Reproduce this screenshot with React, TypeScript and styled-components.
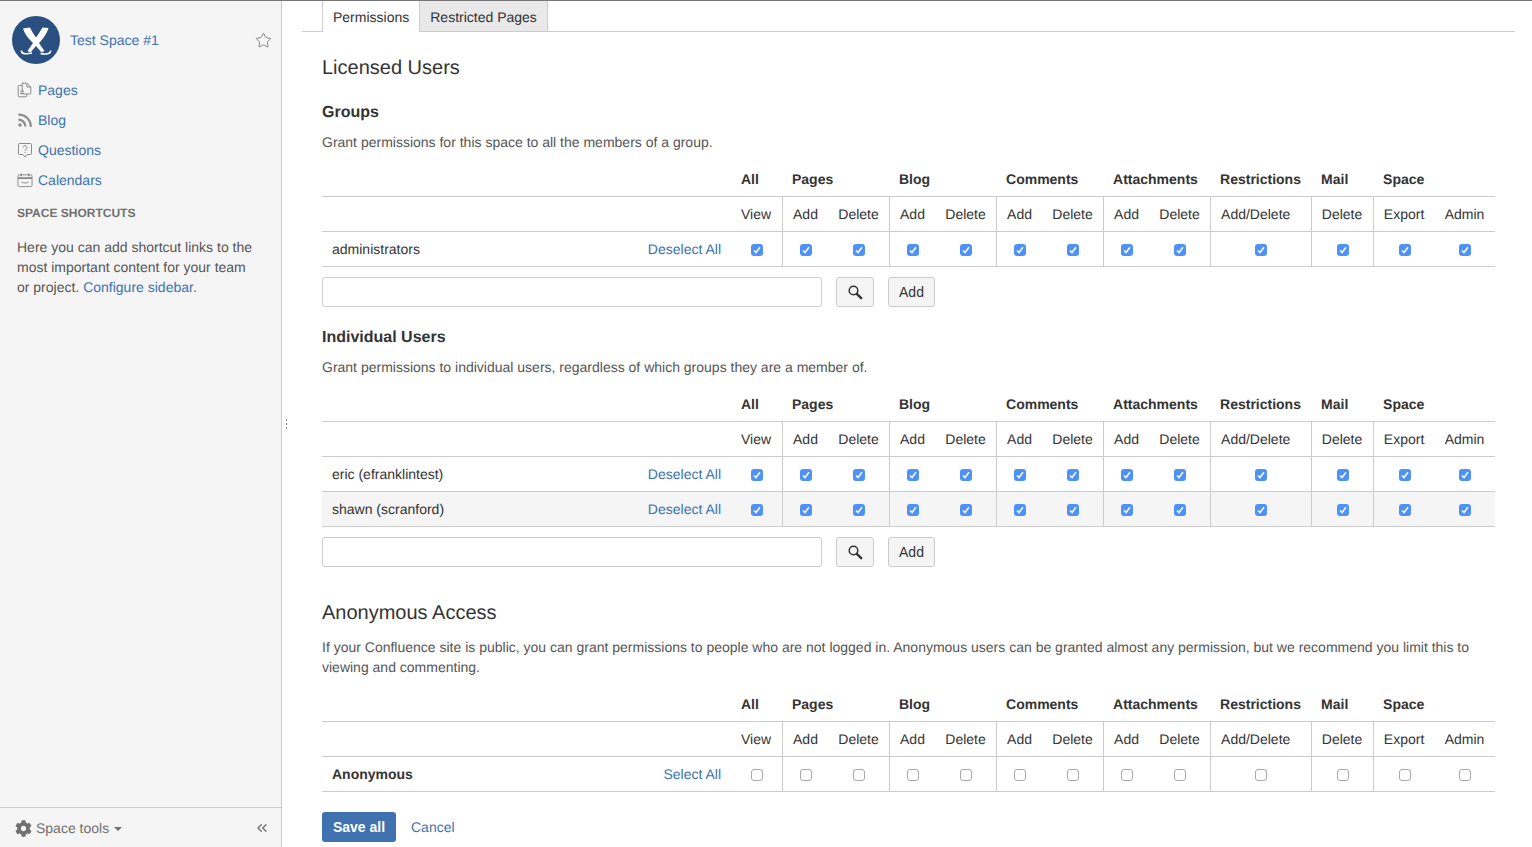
import React from "react";
import styled, { createGlobalStyle } from "styled-components";
import { Star, ChevronsLeft } from "lucide-react";
import { FaCog } from "react-icons/fa";

const Global = createGlobalStyle`
  html, body { margin: 0; padding: 0; height: 100%; overflow: hidden; background: #fff; }
  body { font-family: "Liberation Sans", Arial, sans-serif; font-size: 14px; line-height: 20px; color: #333; text-rendering: geometricPrecision; }
  * { box-sizing: border-box; }
`;

const Page = styled.div`
  display: flex;
  height: 100vh;
  border-top: 1px solid #777;
  position: relative;
`;
const Sidebar = styled.aside`
  width: 282px;
  flex: none;
  display: flex;
  flex-direction: column;
  background: #f5f5f5;
  border-right: 1px solid #ccc;
`;
const SideBody = styled.div`
  flex: 1;
  min-height: 0;
`;
const SpaceHeader = styled.div`
  display: flex;
  align-items: center;
  height: 48px;
  margin: 15px 9px 0 12px;
`;
const SpaceName = styled.a`
  margin-left: 10px;
  flex: 1;
  color: #3b73af;
`;
const NavList = styled.nav`
  margin-top: 11px;
  display: flex;
  flex-direction: column;
`;
const NavItem = styled.a`
  display: flex;
  align-items: center;
  height: 30px;
  padding-left: 17px;
  gap: 5px;
  color: #3b73af;
  svg { flex: none; }
`;
const ShortcutsTitle = styled.h5`
  margin: 8px 0 0 17px;
  font-size: 12px;
  line-height: 20px;
  font-weight: 700;
  color: #707070;
  text-transform: uppercase;
`;
const ShortcutsText = styled.p`
  margin: 14px 20px 0 17px;
  color: #555;
`;
const InlineLink = styled.a`
  color: #3b73af;
`;
const SideFooter = styled.div`
  height: 40px;
  flex: none;
  border-top: 1px solid #ccc;
  display: flex;
  align-items: center;
  padding: 1px 11px 0 15px;
  color: #707070;
`;
const ToolsLabel = styled.span`
  margin-left: 4px;
`;
const Caret = styled.span`
  width: 8px;
  height: 0;
  flex: none;
  margin: 1px 0 0 5px;
  border-left: 4px solid transparent;
  border-right: 4px solid transparent;
  border-top: 4px solid #707070;
`;
const Spacer = styled.span`
  flex: 1;
`;
const Grip = styled.div`
  position: absolute;
  left: 286px;
  top: 418px;
  width: 1px;
  height: 12px;
  background: repeating-linear-gradient(to bottom, #888 0 2px, transparent 2px 4px);
`;
const Main = styled.main`
  flex: 1;
  min-width: 0;
  padding: 0 17px 0 20px;
`;
const Tabs = styled.div`
  display: flex;
  height: 31px;
  padding-left: 20px;
  border-bottom: 1px solid #ccc;
`;
const Tab = styled.div<{ $active?: boolean }>`
  height: ${(p) => (p.$active ? "31px" : "30px")};
  padding: 6px 10px 0;
  border-left: 1px solid #ccc;
  border-right: ${(p) => (p.$active ? "0" : "1px solid #ccc")};
  background: ${(p) => (p.$active ? "#fff" : "#e9e9e9")};
  color: #333;
  white-space: nowrap;
`;
const Content = styled.div`
  padding-left: 20px;
  width: 1193px;
`;
const H2 = styled.h2<{ $top: number }>`
  margin: ${(p) => p.$top}px 0 0;
  font-size: 20px;
  line-height: 28px;
  font-weight: 400;
  color: #333;
`;
const H3 = styled.h3<{ $top: number }>`
  margin: ${(p) => p.$top}px 0 0;
  height: 20px;
  font-size: 16px;
  line-height: 22px;
  font-weight: 700;
  color: #333;
`;
const Para = styled.p`
  margin: 10px 0 0;
  color: #555;
`;
const Table = styled.table`
  margin-top: 10px;
  width: 1173px;
  table-layout: fixed;
  border-collapse: separate;
  border-spacing: 0;
`;
const Head = styled.th`
  height: 35px;
  padding: 0 10px;
  text-align: left;
  font-weight: 700;
  border-bottom: 1px solid #ccc;
  white-space: nowrap;
`;
const SubHead = styled.td<{ $sep?: boolean; $left?: boolean }>`
  height: 35px;
  padding: ${(p) => (p.$left ? "0 0 0 10px" : "0 1px 0 0")};
  text-align: ${(p) => (p.$left ? "left" : "center")};
  border-bottom: 1px solid #ccc;
  border-left: ${(p) => (p.$sep ? "1px solid #ccc" : "0")};
`;
const Row = styled.tr<{ $shaded?: boolean }>`
  background: ${(p) => (p.$shaded ? "#f5f5f5" : "transparent")};
`;
const Cell = styled.td<{ $sep?: boolean }>`
  height: 35px;
  padding: 0;
  text-align: center;
  vertical-align: middle;
  border-bottom: 1px solid #ccc;
  border-left: ${(p) => (p.$sep ? "1px solid #ccc" : "0")};
`;
const NameCell = styled.td`
  height: 35px;
  padding: 0 10px;
  border-bottom: 1px solid #ccc;
`;
const NameWrap = styled.div`
  display: flex;
  justify-content: space-between;
`;
const NameText = styled.span<{ $bold?: boolean }>`
  font-weight: ${(p) => (p.$bold ? 700 : 400)};
`;
const Check = styled.span<{ $on: boolean }>`
  display: flex;
  align-items: center;
  justify-content: center;
  width: 12px;
  height: 12px;
  margin: 1px auto 0;
  border-radius: 3px;
  background: ${(p) => (p.$on ? "#4e92f7" : "#fff")};
  border: ${(p) => (p.$on ? "0" : "1px solid #a9a9a9")};
`;
const FormRow = styled.div`
  display: flex;
  margin-top: 10px;
`;
const TextInput = styled.input`
  width: 500px;
  height: 30px;
  padding: 0 5px;
  background: #fff;
  border: 1px solid #ccc;
  border-radius: 3px;
`;
const GreyButton = styled.button<{ $w: number; $gap: number }>`
  width: ${(p) => p.$w}px;
  height: 30px;
  margin-left: ${(p) => p.$gap}px;
  padding: 0;
  display: inline-flex;
  align-items: center;
  justify-content: center;
  background: #f5f5f5;
  border: 1px solid #ccc;
  border-radius: 3px;
  color: #333;
  font: inherit;
`;
const Actions = styled.div`
  display: flex;
  align-items: center;
  margin-top: 20px;
`;
const SaveButton = styled.button`
  width: 74px;
  height: 30px;
  padding: 0;
  background: #3f72af;
  border: 0;
  border-radius: 3px;
  color: #fff;
  font: inherit;
  font-weight: 700;
`;
const CancelLink = styled.a`
  margin-left: 15px;
  color: #3b73af;
`;

const Logo = () => (
  <svg width="48" height="48" viewBox="0 0 48 48" style={{ flex: "none" }}>
    <circle cx="24" cy="24" r="24" fill="#2a5082" />
    <path
      d="M11 12.500 L18 11.500 C19.500 15 22 18.500 24 21.500 C26 18.500 28.500 15 30.500 11.500 L36.500 12 C35 17.500 31 23 27 27 L32.500 35 L29.500 36.500 L24 30 L18.500 36.500 L15.500 35 L21 27 C16 22.500 12.500 17.500 11 12.500 Z"
      fill="#fff"
    />
    <path
      d="M9.500 34.500 C9 38 14 38.500 20 37 M28.500 37.500 C33 38.500 39.500 38 38.500 34.500"
      fill="none"
      stroke="#fff"
      strokeWidth="1.600"
    />
  </svg>
);
const G = "#8c8c8c";
const PagesIcon = () => (
  <svg width="16" height="16" viewBox="0 0 16 16" fill="none" stroke={G} strokeWidth="1">
    <path d="M5 3.500H2.200a1 1 0 0 0-1 1v9.300a1 1 0 0 0 1 1h6.600a1 1 0 0 0 1-1V12" />
    <path d="M5.200 1.200h4.600l4 3.800v6a1 1 0 0 1-1 1H6.200a1 1 0 0 1-1-1V2.200a1 1 0 0 1 1-1Z" />
    <path d="M9.800 1.500V5h3.800M3 9h4M3 11.500h4" />
  </svg>
);
const BlogIcon = () => (
  <svg width="16" height="16" viewBox="0 0 16 16" fill="none" stroke={G} strokeWidth="2.200">
    <circle cx="3" cy="13" r="1.800" fill={G} stroke="none" />
    <path d="M1.400 7.600a7 7 0 0 1 7 7" />
    <path d="M1.400 2.600a12 12 0 0 1 12.400 12.200" />
  </svg>
);
const QuestionIcon = () => (
  <svg width="16" height="16" viewBox="0 0 16 16" fill="none" stroke={G} strokeWidth="1">
    <path d="M2.500 1.500h11a1 1 0 0 1 1 1v9a1 1 0 0 1-1 1h-3.600L8 15l-2-2.500H2.500a1 1 0 0 1-1-1v-9a1 1 0 0 1 1-1Z" />
    <path d="M6 5.500a2 2 0 1 1 3 1.800c-.7.400-1 .8-1 1.500M8 10v1" />
  </svg>
);
const CalendarIcon = () => (
  <svg width="16" height="16" viewBox="0 0 17 16" fill="none" stroke={G} strokeWidth="1">
    <rect x="1" y="2.500" width="15" height="12.500" rx="1.500" />
    <path d="M1 6h15" strokeWidth="2" />
    <path d="M4.500 1v3M12.500 1v3" strokeWidth="1.600" />
    <path d="M4.500 10c2 1.600 6 1.600 8 0" />
  </svg>
);
const SearchIcon = () => (
  <svg width="16" height="16" viewBox="0 0 16 16" fill="none" stroke="#333">
    <circle cx="6.500" cy="6.500" r="4.300" strokeWidth="1.500" />
    <path d="M9.800 9.800 14.200 14.200" strokeWidth="2.400" strokeLinecap="round" />
  </svg>
);

const Box = ({ on }: { on: boolean }) => (
  <Check $on={on}>
    {on && (
      <svg width="8" height="8" viewBox="0 0 8 8" fill="none" stroke="#fff" strokeWidth="1.500">
        <path d="M1 4.500 3 6.500 7 1.200" />
      </svg>
    )}
  </Check>
);

const groups = [
  { title: "All", span: 1 },
  { title: "Pages", span: 2 },
  { title: "Blog", span: 2 },
  { title: "Comments", span: 2 },
  { title: "Attachments", span: 2 },
  { title: "Restrictions", span: 1 },
  { title: "Mail", span: 1 },
  { title: "Space", span: 2 },
];
const subs = [
  { t: "View" },
  { t: "Add", sep: true },
  { t: "Delete" },
  { t: "Add", sep: true },
  { t: "Delete" },
  { t: "Add", sep: true },
  { t: "Delete" },
  { t: "Add", sep: true },
  { t: "Delete" },
  { t: "Add/Delete", sep: true, left: true },
  { t: "Delete", sep: true },
  { t: "Export", sep: true },
  { t: "Admin" },
];
const widths = [409, 51, 47, 60, 47, 60, 47, 60, 47, 60, 101, 62, 62, 60];

type RowData = { name: string; checked: boolean; bold?: boolean; shaded?: boolean };

const PermTable = ({ rows }: { rows: RowData[] }) => (
  <Table>
    <colgroup>
      {widths.map((w, i) => (
        <col key={i} style={{ width: w }} />
      ))}
    </colgroup>
    <thead>
      <tr>
        <Head />
        {groups.map((g) => (
          <Head key={g.title} colSpan={g.span}>
            {g.title}
          </Head>
        ))}
      </tr>
    </thead>
    <tbody>
      <tr>
        <SubHead />
        {subs.map((s, i) => (
          <SubHead key={i} $sep={s.sep} $left={s.left}>
            {s.t}
          </SubHead>
        ))}
      </tr>
      {rows.map((r) => (
        <Row key={r.name} $shaded={r.shaded}>
          <NameCell>
            <NameWrap>
              <NameText $bold={r.bold}>{r.name}</NameText>
              <InlineLink>{r.checked ? "Deselect All" : "Select All"}</InlineLink>
            </NameWrap>
          </NameCell>
          {subs.map((s, i) => (
            <Cell key={i} $sep={s.sep}>
              <Box on={r.checked} />
            </Cell>
          ))}
        </Row>
      ))}
    </tbody>
  </Table>
);

const AddForm = () => (
  <FormRow>
    <TextInput />
    <GreyButton $w={38} $gap={14}>
      <SearchIcon />
    </GreyButton>
    <GreyButton $w={47} $gap={14}>
      Add
    </GreyButton>
  </FormRow>
);

export default function App() {
  return (
    <Page>
      <Global />
      <Sidebar>
        <SideBody>
          <SpaceHeader>
            <Logo />
            <SpaceName>Test Space #1</SpaceName>
            <Star size={17} color="#707070" strokeWidth={1.2} />
          </SpaceHeader>
          <NavList>
            <NavItem><PagesIcon />Pages</NavItem>
            <NavItem><BlogIcon />Blog</NavItem>
            <NavItem><QuestionIcon />Questions</NavItem>
            <NavItem><CalendarIcon />Calendars</NavItem>
          </NavList>
          <ShortcutsTitle>Space Shortcuts</ShortcutsTitle>
          <ShortcutsText>
            Here you can add shortcut links to the most important content for your team or project.{" "}
            <InlineLink>Configure sidebar</InlineLink>.
          </ShortcutsText>
        </SideBody>
        <SideFooter>
          <FaCog size={17} color="#707070" />
          <ToolsLabel>Space tools</ToolsLabel>
          <Caret />
          <Spacer />
          <ChevronsLeft size={16} color="#707070" strokeWidth={2} />
        </SideFooter>
      </Sidebar>
      <Grip />
      <Main>
        <Tabs>
          <Tab $active>Permissions</Tab>
          <Tab>Restricted Pages</Tab>
        </Tabs>
        <Content>
          <H2 $top={22}>Licensed Users</H2>
          <H3 $top={20}>Groups</H3>
          <Para>Grant permissions for this space to all the members of a group.</Para>
          <PermTable rows={[{ name: "administrators", checked: true }]} />
          <AddForm />
          <H3 $top={20}>Individual Users</H3>
          <Para>Grant permissions to individual users, regardless of which groups they are a member of.</Para>
          <PermTable
            rows={[
              { name: "eric (efranklintest)", checked: true },
              { name: "shawn (scranford)", checked: true, shaded: true },
            ]}
          />
          <AddForm />
          <H2 $top={32}>Anonymous Access</H2>
          <Para>
            If your Confluence site is public, you can grant permissions to people who are not logged in. Anonymous users can be granted almost any permission, but we recommend you limit this to viewing and commenting.
          </Para>
          <PermTable rows={[{ name: "Anonymous", checked: false, bold: true }]} />
          <Actions>
            <SaveButton>Save all</SaveButton>
            <CancelLink>Cancel</CancelLink>
          </Actions>
        </Content>
      </Main>
    </Page>
  );
}
